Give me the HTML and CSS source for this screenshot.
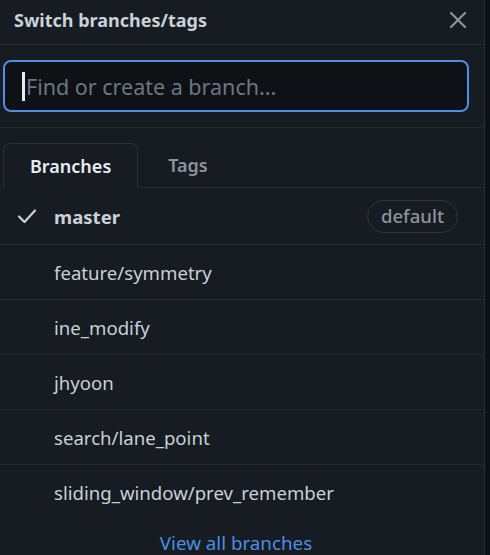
FILE: index.html
```html
<!DOCTYPE html>
<html lang="en">
<head>
<meta charset="utf-8">
<title>Switch branches/tags</title>
<link rel="stylesheet" href="styles.css">
</head>
<body>
<div class="panel">
  <header class="head">
    <span class="title">Switch branches/tags</span>
    <svg class="close" width="18" height="18" viewBox="0 0 18 18" aria-hidden="true">
      <path d="M2 2 L16 16 M16 2 L2 16" stroke="#8b949e" stroke-width="2.2" stroke-linecap="round"/>
    </svg>
  </header>
  <div class="filter">
    <div class="input">
      <span class="caret"></span><span class="ph">Find or create a branch...</span>
    </div>
  </div>
  <nav class="tabs">
    <span class="tab active">Branches</span>
    <span class="tab tags">Tags</span>
    <span class="tab-fill"></span>
  </nav>
  <ul class="list">
    <li class="row first">
      <span class="check">
        <svg width="20" height="16" viewBox="0 0 20 16" aria-hidden="true">
          <path d="M2 8.5 L7.5 14 L18 2.5" fill="none" stroke="#c9d1d9" stroke-width="2.2" stroke-linecap="round" stroke-linejoin="round"/>
        </svg>
      </span>
      <span class="name bold">master</span>
      <span class="badge">default</span>
    </li>
    <li class="row"><span class="check"></span><span class="name">feature/symmetry</span></li>
    <li class="row"><span class="check"></span><span class="name">ine_modify</span></li>
    <li class="row"><span class="check"></span><span class="name">jhyoon</span></li>
    <li class="row"><span class="check"></span><span class="name">search/lane_point</span></li>
    <li class="row last"><span class="check"></span><span class="name">sliding_window/prev_remember</span></li>
  </ul>
  <div class="footer"><a class="all" href="#">View all branches</a></div>
</div>
</body>
</html>
```

FILE: styles.css
```css
html, body {
  margin: 0;
  padding: 0;
  background: #0d1117;
  height: 555px;
  overflow: hidden;
}

.panel {
  width: 484px;
  height: 555px;
  background: #171b22;
  border-right: 1px solid #2b3038;
  font-family: "Noto Sans", "Open Sans", sans-serif;
  color: #c9d1d9;
  overflow: hidden;
}

.head {
  height: 45px;
  box-sizing: border-box;
  display: flex;
  align-items: center;
  justify-content: space-between;
  padding: 0 17px 5px 14px;
  border-bottom: 1px solid #23282f;
}

.title {
  font-size: 18px;
  font-weight: 700;
  color: #c9d1d9;
}

.close {
  display: block;
}

.filter {
  padding: 15px 15px 15px 3px;
  border-bottom: 1px solid #23282f;
}

.input {
  height: 48px;
  border: 2px solid #4d8fe6;
  border-radius: 8px;
  background: #0e1116;
  display: flex;
  align-items: center;
  padding-left: 17px;
}

.caret {
  width: 3px;
  height: 29px;
  background: #e6edf3;
  margin-right: 1px;
}

.ph {
  font-size: 21.5px;
  color: #6e7681;
}

.tabs {
  display: flex;
  align-items: stretch;
  padding: 15px 0 0 3px;
  height: 45px;
}

.tab {
  display: flex;
  align-items: center;
  padding: 0 27px;
  font-size: 18px;
  font-weight: 600;
  color: #8b949e;
  border-bottom: 1px solid #23282f;
}

.tab.tags {
  padding-left: 30px;
}

.tab.active {
  color: #e6edf3;
  border: 1px solid #2b3038;
  border-bottom: 1px solid transparent;
  border-radius: 7px 7px 0 0;
  padding: 0 26px;
}

.tab-fill {
  flex: 1;
  border-bottom: 1px solid #23282f;
}

.list {
  list-style: none;
  margin: 0;
  padding: 0;
}

.row {
  display: flex;
  align-items: center;
  height: 54px;
  padding: 0 26px 0 17px;
  border-bottom: 1px solid #23282f;
}

.row.first {
  height: 56px;
}

.row.last {
  border-bottom: none;
}

.check {
  width: 37px;
  display: flex;
  align-items: center;
}

.name {
  flex: 1;
  font-size: 18.6px;
  color: #c9d1d9;
}

.name.bold {
  font-weight: 700;
}

.badge {
  font-size: 18.5px;
  font-weight: 500;
  color: #8b949e;
  border: 1px solid #30363d;
  border-radius: 17px;
  padding: 2px 13px 4px;
}

.footer {
  display: flex;
  justify-content: center;
  padding: 11px 12px 0 0;
}

.all {
  font-size: 18.8px;
  color: #4a90e2;
  text-decoration: none;
}
```
